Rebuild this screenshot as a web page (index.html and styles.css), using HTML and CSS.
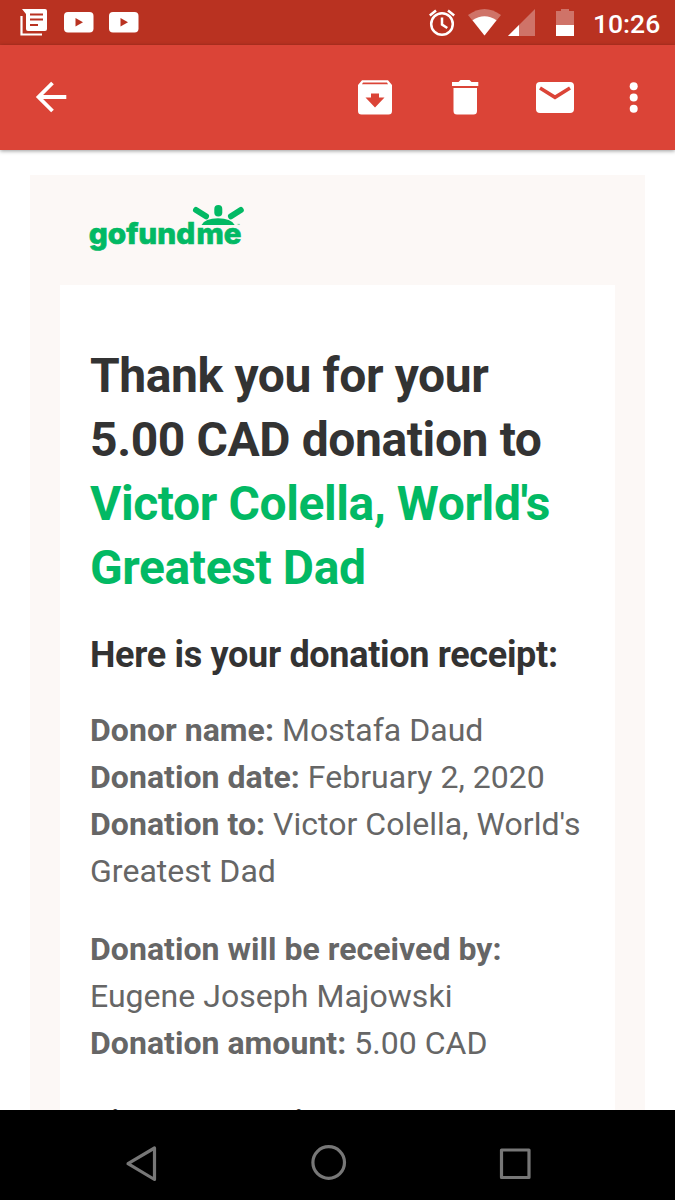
FILE: index.html
```html
<!DOCTYPE html>
<html lang="en">
<head>
<meta charset="utf-8">
<title>Donation receipt</title>
<link rel="stylesheet" href="styles.css">
</head>
<body>
<div class="screen">
  <header class="status">
    <svg class="status-icons" width="150" height="45" viewBox="0 0 150 45">
      <path fill="none" stroke="#fff" stroke-width="2.200" d="M21.500 16V34.500H42"/>
      <path fill="#fff" d="M22 9H45Q47 9 47 11V29Q47 31 45 31H28Q26 31 26 29V14Z"/>
      <path stroke="#b93221" stroke-width="2" d="M30 14.500H43M30 19.500H43M30 25H38"/>
      <rect x="64" y="12" width="29.500" height="20.500" rx="4" fill="#fff"/>
      <path fill="#b93221" d="M75.500 18L83 22.300L75.500 26.500Z"/>
      <rect x="109" y="12" width="29.500" height="20.500" rx="4" fill="#fff"/>
      <path fill="#b93221" d="M120.500 18L128 22.300L120.500 26.500Z"/>
    </svg>
    <svg class="status-icons" width="160" height="45" viewBox="420 0 160 45">
      <circle cx="442" cy="24" r="10.800" fill="none" stroke="#fff" stroke-width="2.500"/>
      <path fill="none" stroke="#fff" stroke-width="2.500" d="M429.800 15.500L436 10.500M448 10.500L454.200 15.500M442 17.500V24.500L447.300 28"/>
      <path fill="#fff" fill-opacity=".32" d="M484.500 35.500L468 15Q484.500 3 501 15Z"/>
      <path fill="#fff" d="M484.500 35.500L472.500 20.300Q484.500 12 496.500 20.300Z"/>
      <path fill="#fff" fill-opacity=".32" d="M508 36L535 9V36Z"/>
      <path fill="#fff" d="M508 36L519 25V36Z"/>
      <path fill="#fff" fill-opacity=".32" d="M556 11H561V9H569V11H574V25H556Z"/>
      <path fill="#fff" d="M556 25H574V36H556Z"/>
    </svg>
    <span class="clock">10:26</span>
  </header>
  <nav class="toolbar">
    <svg width="675" height="105" viewBox="0 45 675 105" fill="#fff">
      <path fill="none" stroke="#fff" stroke-width="3.800" d="M66.300 97H39M52.500 83L38.500 97L52.500 111"/>
      <path fill-rule="evenodd" d="M362 80.300H388L392 85V111Q392 114.500 388.500 114.500H361.500Q358 114.500 358 111V85ZM363 82.500L362 84.300H388L387 82.500ZM371 93.500V97.500H365.500L375 107.500L384.500 97.500H379V93.500Z"/>
      <path d="M452 82H458.500L460.500 80H469.500L471.500 82H478.300V86H452ZM453.500 88H477V111Q477 114.500 473.500 114.500H457Q453.500 114.500 453.500 111Z"/>
      <rect x="536" y="82" width="38" height="31" rx="4"/>
      <path fill="none" stroke="#db4437" stroke-width="3.600" d="M540 88L555 97.300L570 88"/>
      <circle cx="633.700" cy="86.300" r="4"/><circle cx="633.700" cy="97.500" r="4"/><circle cx="633.700" cy="108.700" r="4"/>
    </svg>
  </nav>
  <main class="mail">
    <div class="frame">
      <div class="brand">
        <svg width="165" height="60" viewBox="85 200 165 60" fill="#02b964">
          <text class="wordmark" y="243.500"><tspan x="88.700" textLength="106.500" lengthAdjust="spacingAndGlyphs">gofund</tspan><tspan x="196.500" textLength="45" lengthAdjust="spacingAndGlyphs">me</tspan></text>
          <path d="M201.500 225Q205 218.300 218 218.300Q231 218.300 234.700 225Z"/>
          <path fill="none" stroke="#02b964" stroke-width="6" stroke-linecap="round" d="M196 210L206 216.300M240.800 210L231 216.300"/>
          <path fill="none" stroke="#02b964" stroke-width="8" stroke-linecap="round" d="M218.300 209V212.500"/>
          <text class="trademark" x="237" y="227">™</text>
        </svg>
      </div>
      <article class="card">
        <h1>Thank you for your<br>5.00 CAD donation to<br><a>Victor Colella, World's<br>Greatest Dad</a></h1>
        <h2>Here is your donation receipt:</h2>
        <p><b>Donor name:</b> Mostafa Daud<br><b>Donation date:</b> February 2, 2020<br><b>Donation to:</b> Victor Colella, World's<br>Greatest Dad</p>
        <p><b>Donation will be received by:</b><br>Eugene Joseph Majowski<br><b>Donation amount:</b> 5.00 CAD</p>
        <p class="next"><b>View a Campaign</b></p>
      </article>
    </div>
  </main>
  <footer class="navbar">
    <svg width="675" height="90" viewBox="0 1110 675 90" fill="none" stroke="#777" stroke-width="3.200" stroke-linejoin="round">
      <path d="M128 1163.700L154.500 1148V1179.500Z"/>
      <circle cx="328.700" cy="1162.500" r="15.800"/>
      <rect x="501.500" y="1150" width="27.500" height="27.500"/>
    </svg>
  </footer>
</div>
</body>
</html>
```
FILE: styles.css
```css
body { margin: 0; background: #fff; font-family: Roboto, sans-serif; }
.screen { width: 675px; height: 1200px; display: flex; flex-direction: column; overflow: hidden; }
.status { height: 45px; flex: none; display: flex; background: #b93221; color: #fff; }
.status-icons { flex: none; display: block; }
.status-icons + .status-icons { margin-left: 270px; }
.clock { margin-left: 13px; font-size: 26.5px; line-height: 47px; font-weight: 500; white-space: nowrap; }
.toolbar { position: relative; height: 105px; flex: none; background: #db4437; box-shadow: 0 1px 4px rgba(0,0,0,.4); }
.toolbar svg, .brand svg, .navbar svg { display: block; }
.mail { flex: 1; min-height: 0; overflow: hidden; padding: 25px 30px 0; }
.frame { background: #fcf8f6; padding: 0 30px; height: 1100px; }
.brand { height: 85px; padding: 25px 0 0 25px; }
.wordmark { font: 800 29.5px Inter, sans-serif; stroke: #02b964; stroke-width: .7px; }
.trademark { font: 5px Roboto, sans-serif; }
.card { background: #fff; height: 900px; padding: 59px 30px 0; }
h1 { margin: 0; font-size: 48px; line-height: 64px; font-weight: 700; letter-spacing: -.4px; color: #333; white-space: nowrap; }
h1 a { color: #02b964; }
h2 { margin: 32px 0 0; font-size: 36px; line-height: 46px; font-weight: 700; letter-spacing: -.32px; color: #333; white-space: nowrap; }
p { margin: 31px 0 0; font-size: 32px; line-height: 47px; letter-spacing: .03px; color: #666; white-space: nowrap; }
h2 + p { margin-top: 29.3px; }
.next { color: #333; }
.navbar { height: 90px; flex: none; background: #000; }
```
